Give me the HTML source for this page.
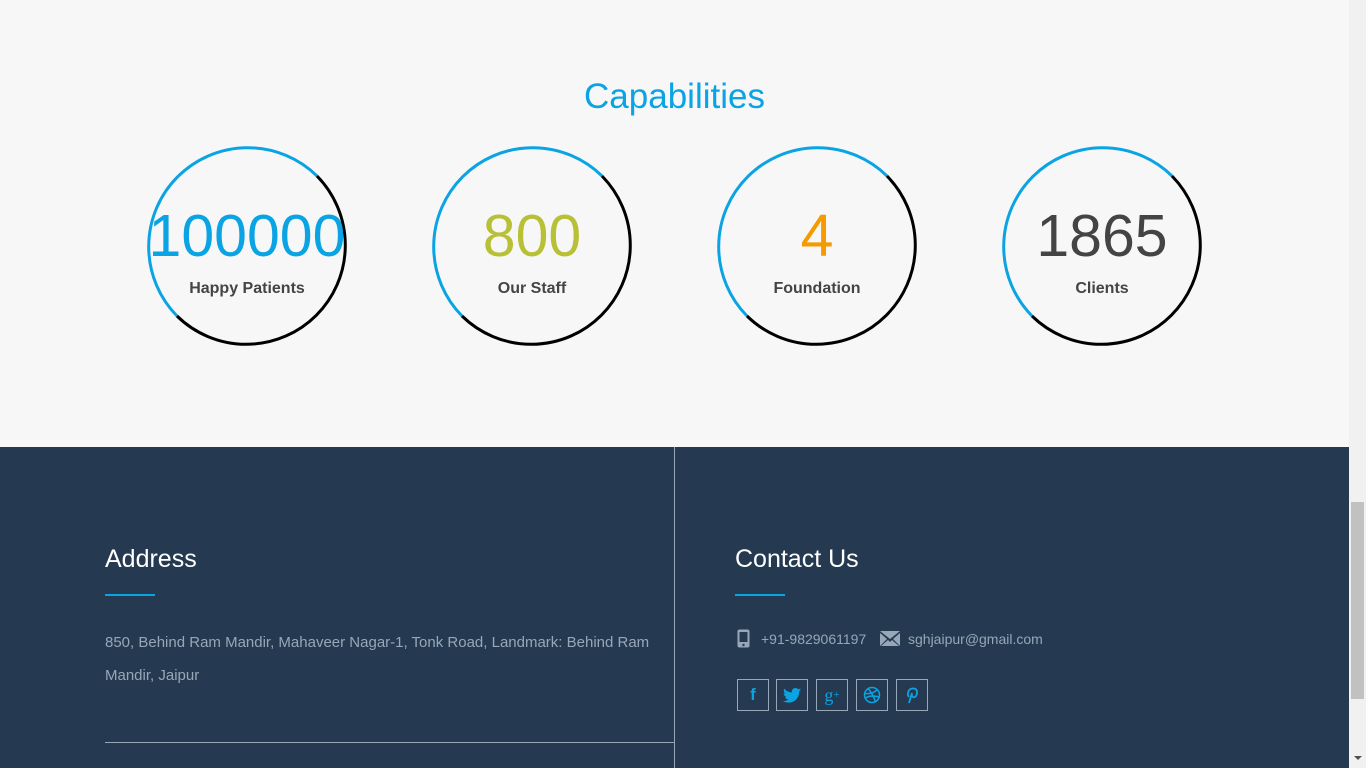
<!DOCTYPE html>
<html><head><meta charset="utf-8"><style>
*{margin:0;padding:0;box-sizing:border-box}
body{width:1366px;height:768px;overflow:hidden;background:#f7f7f7;font-family:"Liberation Sans",Arial,sans-serif;position:relative}
.abs{position:absolute}
h2.cap{position:absolute;left:0;width:1349px;top:77px;text-align:center;font-weight:normal;font-size:35px;color:#0aa3e3}
.num{position:absolute;width:220px;text-align:center;font-size:59px;top:201px;line-height:70px}
.lbl{position:absolute;width:220px;text-align:center;font-size:16px;font-weight:bold;color:#444;top:280px}
footer{position:absolute;left:0;top:447px;width:1349px;height:321px;background:#253a50}
.h{position:absolute;color:#fff;font-size:25px;top:98px}
.ul{position:absolute;top:147px;width:50px;height:2px;background:#0aa3e3}
.t{color:#96a7b8;font-size:15px;position:absolute}
.soc{position:absolute;top:232px;width:32px;height:32px;border:1px solid #96a7b8;display:flex;align-items:center;justify-content:center;color:#0aa3e3;font-size:17px}
</style></head><body>
<h2 class="cap">Capabilities</h2>
<svg class="abs" style="left:0;top:0" width="1349" height="447">
<g fill="none" stroke-width="3">
<path d="M317 176 A99 99 0 0 0 177 316" stroke="#0aa3e3"/><path d="M177 316 A99 99 0 0 0 317 176" stroke="#000"/>
<path d="M602 176 A99 99 0 0 0 462 316" stroke="#0aa3e3"/><path d="M462 316 A99 99 0 0 0 602 176" stroke="#000"/>
<path d="M887 176 A99 99 0 0 0 747 316" stroke="#0aa3e3"/><path d="M747 316 A99 99 0 0 0 887 176" stroke="#000"/>
<path d="M1172 176 A99 99 0 0 0 1032 316" stroke="#0aa3e3"/><path d="M1032 316 A99 99 0 0 0 1172 176" stroke="#000"/>
</g></svg>
<div class="num" style="left:137px;color:#0aa3e3">100000</div><div class="lbl" style="left:137px">Happy Patients</div>
<div class="num" style="left:422px;color:#b8c036">800</div><div class="lbl" style="left:422px">Our Staff</div>
<div class="num" style="left:707px;color:#f59b00">4</div><div class="lbl" style="left:707px">Foundation</div>
<div class="num" style="left:992px;color:#444">1865</div><div class="lbl" style="left:992px">Clients</div>
<footer>
<div class="abs" style="left:674px;top:0;width:1px;height:321px;background:#96a7b8"></div>
<div class="abs" style="left:105px;top:295px;width:569px;height:1px;background:#96a7b8"></div>
<div class="h" style="left:105px">Address</div><div class="ul" style="left:105px"></div>
<div class="t" style="left:105px;top:179px;line-height:33px;width:560px">850, Behind Ram Mandir, Mahaveer Nagar-1, Tonk Road, Landmark: Behind Ram Mandir, Jaipur</div>
<div class="h" style="left:735px">Contact Us</div><div class="ul" style="left:735px"></div>
<svg class="abs" style="left:737px;top:182px" width="13" height="19"><rect x="0.5" y="0.5" width="12" height="18" rx="2" fill="#96a7b8"/><rect x="2.5" y="3" width="8" height="10" fill="#253a50"/><circle cx="6.5" cy="16" r="1.2" fill="#253a50"/></svg>
<div class="t" style="left:761px;top:184px;font-size:14px">+91-9829061197</div>
<svg class="abs" style="left:880px;top:184px" width="20" height="15"><path d="M0 0H20L10 8Z" fill="#96a7b8"/><path d="M0 2L7 8L0 15ZM20 2L13 8L20 15ZM8 9L10 11L12 9L19 15H1Z" fill="#96a7b8"/></svg>
<div class="t" style="left:908px;top:184px;font-size:14px">sghjaipur@gmail.com</div>
<div class="soc" style="left:737px;font-weight:bold;font-family:'Liberation Sans'">f</div>
<div class="soc" style="left:776px"><svg width="18" height="15" viewBox="0 0 24 20"><path fill="#0aa3e3" d="M24 2.4c-.9.4-1.8.6-2.8.8 1-.6 1.800-1.600 2.200-2.700-1 .6-2 1-3.100 1.200C19.300.7 18 0 16.600 0c-2.700 0-4.900 2.200-4.900 4.900 0 .4 0 .8.1 1.100C7.700 5.800 4.100 3.900 1.700.9c-.4.7-.7 1.600-.7 2.500 0 1.700.9 3.200 2.200 4.100-.8 0-1.600-.2-2.200-.6v.1c0 2.400 1.700 4.400 3.900 4.800-.4.1-.8.2-1.300.2-.3 0-.6 0-.9-.1.6 2 2.400 3.400 4.600 3.400-1.700 1.300-3.800 2.100-6.100 2.100-.4 0-.8 0-1.200-.1 2.200 1.400 4.800 2.200 7.500 2.200 9.100 0 14-7.500 14-14v-.6c1-.7 1.800-1.600 2.500-2.500z"/></svg></div>
<div class="soc" style="left:816px;font-family:'Liberation Serif';font-size:18px">g<span style="font-size:11px">+</span></div>
<div class="soc" style="left:856px"><svg width="18" height="18" viewBox="0 0 18 18" fill="none" stroke="#0aa3e3" stroke-width="1.5"><circle cx="9" cy="9" r="7.5"/><path d="M5 2.5C9 7 11 11 12.5 16M1.8 7.5C6 8 11 7 14.5 3.5M2.5 12C6 9.5 11 9.5 16.3 11"/></svg></div>
<div class="soc" style="left:896px"><svg width="14" height="18" viewBox="0 0 14 18" fill="none" stroke="#0aa3e3" stroke-width="1.8"><path d="M4 11C2 9 2.5 3 7.5 2.5S13 7 11 10 6 10.5 7 7M7 7L4 17"/></svg></div>
</footer>
<div class="abs" style="left:1349px;top:0;width:17px;height:768px;background:#f1f1f1"></div>
<div class="abs" style="left:1351px;top:502px;width:13px;height:197px;background:#c1c1c1"></div>
<div class="abs" style="left:1354px;top:756px;width:0;height:0;border-left:4px solid transparent;border-right:4px solid transparent;border-top:4px solid #505050"></div>
</body></html>
